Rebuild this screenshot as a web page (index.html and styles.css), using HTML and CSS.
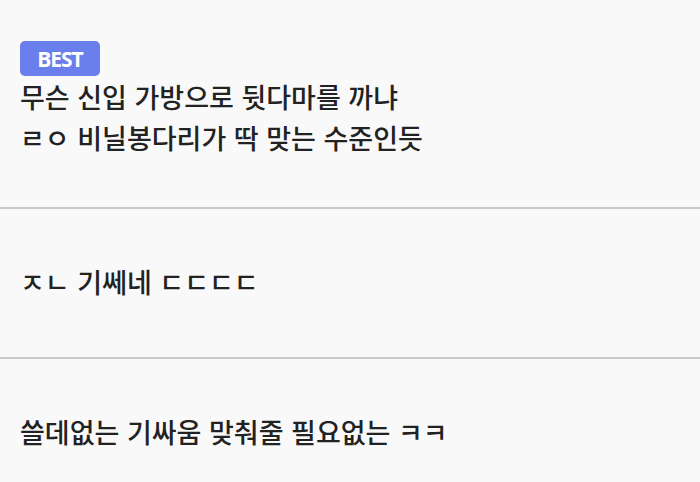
FILE: index.html
```html
<!DOCTYPE html>
<html lang="ko">
<head>
<meta charset="utf-8">
<link rel="stylesheet" href="styles.css">
</head>
<body>
<ul class="comments">
  <li class="comment comment--best">
    <span class="badge">BEST</span>
    <p class="text">무슨 신입 가방으로 뒷다마를 까냐<br>ㄹㅇ 비닐봉다리가 딱 맞는 수준인듯</p>
  </li>
  <li class="comment">
    <p class="text">ㅈㄴ 기쎄네 ㄷㄷㄷㄷ</p>
  </li>
  <li class="comment">
    <p class="text">쓸데없는 기싸움 맞춰줄 필요없는 ㅋㅋ</p>
  </li>
</ul>
</body>
</html>
```

FILE: styles.css
```css
html, body {
  margin: 0;
  padding: 0;
  background: #f9f9f9;
}

body {
  font-family: "Noto Sans CJK KR", "Noto Sans", sans-serif;
  color: #222;
}

.comments {
  list-style: none;
  margin: 0;
  padding: 0;
}

.comment {
  display: flex;
  flex-direction: column;
  align-items: flex-start;
  padding: 52px 20px 55px;
  border-bottom: 2px solid #c9c9c9;
}

.comment--best {
  padding-top: 41px;
  padding-bottom: 49px;
}

.badge {
  display: inline-flex;
  align-items: center;
  justify-content: center;
  width: 80px;
  height: 35px;
  border-radius: 5px;
  background: #6b7fec;
  color: #fff;
  font-family: "Open Sans", "Noto Sans", sans-serif;
  font-weight: 700;
  font-size: 21px;
  letter-spacing: -1px;
}

.text {
  margin: 0;
  font-size: 27px;
  font-weight: 500;
  line-height: 41px;
  letter-spacing: 0;
}
```
